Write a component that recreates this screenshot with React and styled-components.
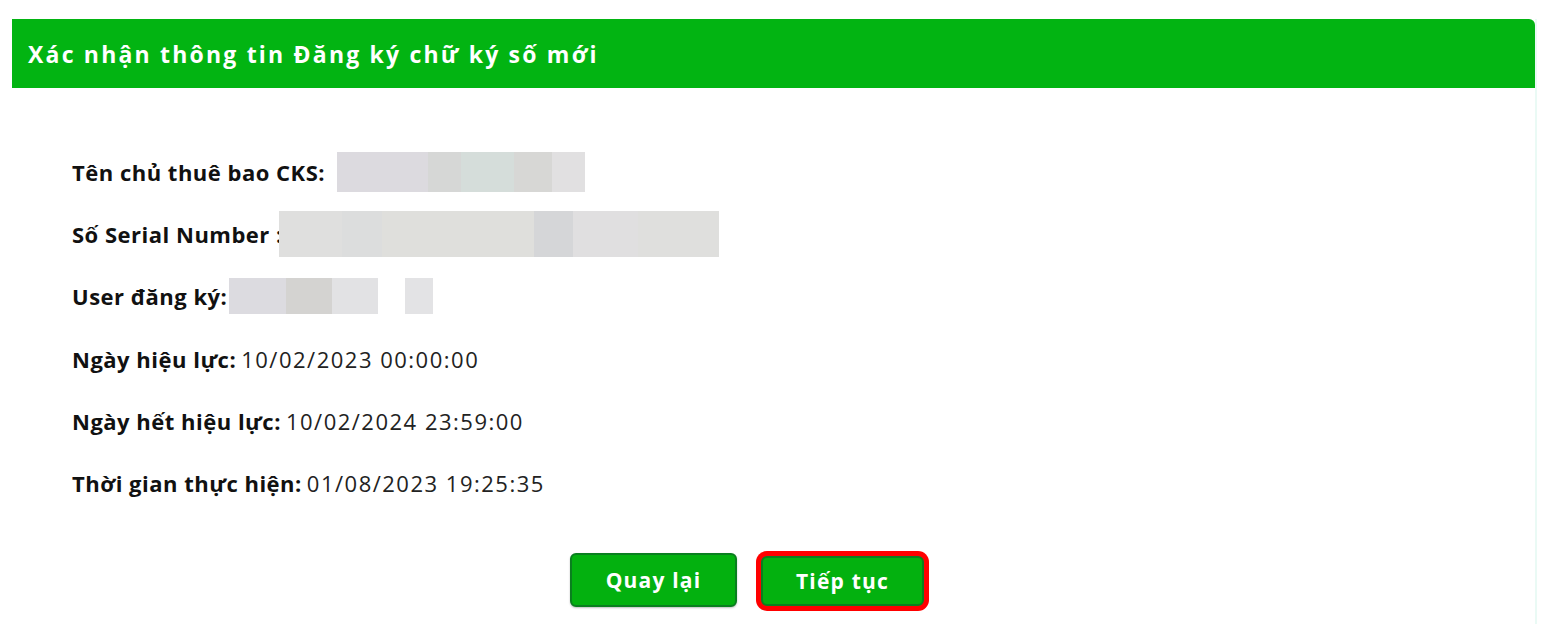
import React from "react";
import styled, { createGlobalStyle } from "styled-components";

const GlobalStyle = createGlobalStyle`
  html, body {
    margin: 0;
    padding: 0;
    background: #ffffff;
    overflow: hidden;
  }
  body {
    font-family: "Open Sans", "Liberation Sans", sans-serif;
  }
`;

const Page = styled.div`
  width: 1556px;
  height: 634px;
  padding: 19px 0 0 12px;
  box-sizing: border-box;
`;

const Panel = styled.div`
  width: 1525px;
  height: 605px;
  border-right: 2px solid #eafaf5;
  box-sizing: border-box;
  display: flex;
  flex-direction: column;
`;

const Header = styled.div`
  height: 69px;
  background: #02b412;
  border-top-right-radius: 6px;
  display: flex;
  align-items: center;
  padding-left: 16px;
  color: #ffffff;
  font-size: 23px;
  font-weight: 700;
  letter-spacing: 2.2px;
`;

const Body = styled.div`
  padding: 53px 0 0 60px;
  display: flex;
  flex-direction: column;
`;

const Row = styled.div`
  height: 62.2px;
  display: flex;
  align-items: center;
  font-size: 22px;
  color: #111;
`;

const Label = styled.span`
  font-weight: 700;
  letter-spacing: 0.5px;
  margin-right: ${({ $gap }) => $gap ?? 5}px;
`;

const Value = styled.span`
  font-weight: 400;
  letter-spacing: 1.5px;
  color: #222;
`;

const Blur = styled.span`
  display: inline-flex;
  height: ${({ $h }) => $h}px;
`;

const BlurCell = styled.span`
  display: block;
  width: ${({ $w }) => $w}px;
  margin-left: ${({ $ml }) => $ml ?? 0}px;
  background: ${({ $c }) => $c};
`;

const ButtonBar = styled.div`
  display: flex;
  justify-content: center;
  gap: 24px;
  padding: 39px 53px 0 0;
`;

const Button = styled.button`
  width: ${({ $w }) => $w}px;
  height: ${({ $h }) => $h}px;
  background: #03b10f;
  border: 2px solid #0a7f1f;
  border-radius: 6px;
  color: #ffffff;
  font-family: "Open Sans", "Liberation Sans", sans-serif;
  font-size: 21px;
  font-weight: 700;
  letter-spacing: 1.2px;
  cursor: pointer;
  box-shadow: ${({ $active }) =>
    $active ? "0 0 0 5px #ff0000" : "0 1px 2px rgba(0,0,0,0.25)"};
  margin-top: ${({ $active }) => ($active ? 3 : 0)}px;
`;

const blurs = {
  owner: {
    h: 40,
    cells: [
      { w: 91, c: "#dcdadf" },
      { w: 33, c: "#d6d7d6" },
      { w: 53, c: "#d5ddda" },
      { w: 38, c: "#d7d7d5" },
      { w: 33, c: "#e1e0e1" },
    ],
  },
  serial: {
    h: 46,
    cells: [
      { w: 63, c: "#dfdfde" },
      { w: 40, c: "#dcdddd" },
      { w: 152, c: "#dfdfdc" },
      { w: 39, c: "#d5d6d8" },
      { w: 65, c: "#e0dfe0" },
      { w: 81, c: "#dfdfdd" },
    ],
  },
  user: {
    h: 36,
    cells: [
      { w: 57, c: "#dcdbe0" },
      { w: 46, c: "#d4d3d1" },
      { w: 46, c: "#e2e2e4" },
      { w: 28, c: "#e3e3e5", ml: 27 },
    ],
  },
};

const Masked = ({ data }) => (
  <Blur $h={data.h}>
    {data.cells.map((c, i) => (
      <BlurCell key={i} $w={c.w} $c={c.c} $ml={c.ml} />
    ))}
  </Blur>
);

export default function App() {
  return (
    <>
      <GlobalStyle />
      <Page>
        <Panel>
          <Header>Xác nhận thông tin Đăng ký chữ ký số mới</Header>
          <Body>
            <Row>
              <Label $gap={12}>Tên chủ thuê bao CKS:</Label>
              <Masked data={blurs.owner} />
            </Row>
            <Row>
              <Label $gap={-4}>Số Serial Number :</Label>
              <Masked data={blurs.serial} />
            </Row>
            <Row>
              <Label $gap={2}>User đăng ký:</Label>
              <Masked data={blurs.user} />
            </Row>
            <Row>
              <Label>Ngày hiệu lực:</Label>
              <Value>10/02/2023 00:00:00</Value>
            </Row>
            <Row>
              <Label>Ngày hết hiệu lực:</Label>
              <Value>10/02/2024 23:59:00</Value>
            </Row>
            <Row>
              <Label>Thời gian thực hiện:</Label>
              <Value>01/08/2023 19:25:35</Value>
            </Row>
          </Body>
          <ButtonBar>
            <Button $w={167} $h={54}>Quay lại</Button>
            <Button $w={163} $h={50} $active>
              Tiếp tục
            </Button>
          </ButtonBar>
        </Panel>
      </Page>
    </>
  );
}
